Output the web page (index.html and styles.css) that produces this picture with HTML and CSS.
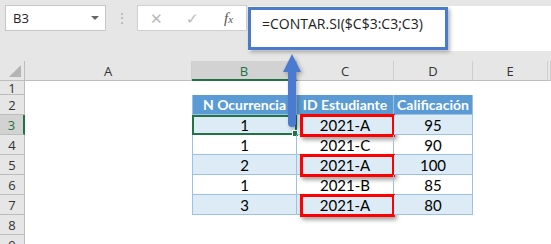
FILE: index.html
```html
<!DOCTYPE html>
<html lang="es">
<head>
  <meta charset="UTF-8">
  <title>CONTAR.SI acumulado</title>
  <link rel="stylesheet" href="styles.css">
</head>
<body>

  <div class="toolbar">
    <div class="namebox">
      <span>B3</span>
      <span class="caret"></span>
    </div>
    <div class="grip">⋮</div>
    <div class="fbuttons">
      <span class="btn">✕</span>
      <span class="btn">✓</span>
      <span class="fx">f<small>x</small></span>
    </div>
    <div class="formula">
      <span class="ftext">=CONTAR.SI($C$3:C3;C3)</span>
      <div class="callout"></div>
    </div>
  </div>

  <div class="sheet">
    <div class="corner"><span class="tri"></span></div>
    <div class="colhead">A</div>
    <div class="colhead active">B</div>
    <div class="colhead">C</div>
    <div class="colhead">D</div>
    <div class="colhead">E</div>
    <div class="colhead"></div>

    <div class="rowhead">1</div>
    <div class="cell"></div><div class="cell"></div><div class="cell"></div><div class="cell"></div><div class="cell"></div><div class="cell"></div>

    <div class="rowhead">2</div>
    <div class="cell"></div>
    <div class="cell th first">N Ocurrencia</div>
    <div class="cell th">ID Estudiante</div>
    <div class="cell th">Calificación</div>
    <div class="cell"></div><div class="cell"></div>

    <div class="rowhead active">3</div>
    <div class="cell"></div>
    <div class="cell td band first selected">1<span class="handle"></span></div>
    <div class="cell td band">2021-A<span class="mark"></span></div>
    <div class="cell td band">95</div>
    <div class="cell"></div><div class="cell"></div>

    <div class="rowhead">4</div>
    <div class="cell"></div>
    <div class="cell td first">1</div>
    <div class="cell td">2021-C</div>
    <div class="cell td">90</div>
    <div class="cell"></div><div class="cell"></div>

    <div class="rowhead">5</div>
    <div class="cell"></div>
    <div class="cell td band first">2</div>
    <div class="cell td band">2021-A<span class="mark"></span></div>
    <div class="cell td band">100</div>
    <div class="cell"></div><div class="cell"></div>

    <div class="rowhead">6</div>
    <div class="cell"></div>
    <div class="cell td first">1</div>
    <div class="cell td">2021-B</div>
    <div class="cell td">85</div>
    <div class="cell"></div><div class="cell"></div>

    <div class="rowhead">7</div>
    <div class="cell"></div>
    <div class="cell td band first">3</div>
    <div class="cell td band">2021-A<span class="mark"></span></div>
    <div class="cell td band">80</div>
    <div class="cell"></div><div class="cell"></div>

    <div class="rowhead">8</div>
    <div class="cell"></div><div class="cell"></div><div class="cell"></div><div class="cell"></div><div class="cell"></div><div class="cell"></div>

    <div class="rowhead">9</div>
    <div class="cell"></div><div class="cell"></div><div class="cell"></div><div class="cell"></div><div class="cell"></div><div class="cell"></div>

    <!-- arrow from the selected cell up to the formula -->
    <svg class="arrow" width="24" height="80" viewBox="0 0 24 80">
      <path d="M12 1 L21 19 L16 19 L16 70 Q16 74 12 74 Q8 74 8 70 L8 19 L3 19 Z" fill="#4a7bd0"/>
    </svg>
  </div>

</body>
</html>
```

FILE: styles.css
```css
body {
  margin: 0;
  width: 551px;
  height: 244px;
  overflow: hidden;
  background: #fff;
  font-family: "Open Sans", "Noto Sans", sans-serif;
  position: relative;
}

/* formula bar */
.toolbar {
  height: 61px;
  background: #e6e6e6;
  display: flex;
  align-items: flex-start;
  padding: 5px 0 0 5px;
  box-sizing: border-box;
}
.namebox {
  width: 101px;
  height: 26px;
  box-sizing: border-box;
  background: #fff;
  border: 1px solid #c6c6c6;
  display: flex;
  align-items: center;
  justify-content: space-between;
  padding: 0 6px 0 7px;
  font-size: 13px;
  color: #222;
}
.caret {
  width: 0; height: 0;
  border-left: 4px solid transparent;
  border-right: 4px solid transparent;
  border-top: 4px solid #666;
}
.grip {
  width: 31px;
  text-align: center;
  color: #b0b0b0;
  font-size: 14px;
  line-height: 26px;
}
.fbuttons {
  width: 110px;
  height: 26px;
  box-sizing: border-box;
  background: #fff;
  border: 1px solid #d0d0d0;
  display: flex;
  align-items: center;
  padding-left: 12px;
}
.btn { width: 36px; color: #b8b8b8; font-size: 15px; }
.fx {
  margin-left: 2px;
  font-family: "Liberation Serif", serif;
  font-style: italic;
  font-size: 15px;
  color: #555;
}
.fx small { font-size: 11px; }
.formula {
  flex: 1;
  height: 45px;
  margin: 1px 0 0 1px;
  background: #fff;
  position: relative;
  padding: 8px 0 0 14px;
  box-sizing: border-box;
  font-size: 14px;
  color: #222;
}
.callout {
  position: absolute;
  left: 0; top: 1px;
  width: 200px; height: 43px;
  box-sizing: border-box;
  border: 3px solid #4a7acb;
  box-shadow: 2px 2px 4px rgba(0,0,0,0.3);
}

/* worksheet */
.sheet {
  display: grid;
  grid-template-columns: 25px 167px 105px 97px 79px 75px 3px;
  grid-template-rows: 20px 14px repeat(7, 20px) 20px;
  position: relative;
}
.corner {
  background: #e6e6e6;
  border-right: 1px solid #bdbdbd;
  border-bottom: 1px solid #bdbdbd;
  position: relative;
}
.tri {
  position: absolute;
  right: 3px; bottom: 3px;
  width: 0; height: 0;
  border-left: 12px solid transparent;
  border-bottom: 12px solid #b4b4b4;
}
.colhead {
  background: #e6e6e6;
  border-right: 1px solid #cfcfcf;
  border-bottom: 1px solid #bdbdbd;
  font-size: 13px;
  color: #333;
  text-align: center;
  line-height: 20px;
  box-sizing: border-box;
}
.colhead.active {
  background: #d2d2d2;
  border-bottom: 2px solid #217346;
  color: #217346;
}
.rowhead {
  background: #e6e6e6;
  border-right: 1px solid #bdbdbd;
  border-bottom: 1px solid #bdbdbd;
  font-size: 13px;
  color: #333;
  display: flex;
  align-items: center;
  justify-content: center;
  box-sizing: border-box;
}
.rowhead.active {
  background: #d2d2d2;
  border-right: 2px solid #217346;
  color: #217346;
}
.cell {
  font-family: Lato, "Open Sans", sans-serif;
  font-size: 15px;
  color: #000;
  position: relative;
  box-sizing: border-box;
}
.th, .td {
  display: flex;
  align-items: center;
  justify-content: center;
  border-right: 1px solid #9bc2e6;
  border-bottom: 1px solid #9bc2e6;
  white-space: nowrap;
}
.th {
  background: #5b9bd5;
  color: #fff;
  font-weight: bold;
  font-size: 14px;
}
.first { border-left: 1px solid #9bc2e6; }
.band { background: #ddebf7; }
.selected { border: 2px solid #217346; }
.handle {
  position: absolute;
  right: -4px; bottom: -4px;
  width: 5px; height: 5px;
  background: #217346;
  border: 1px solid #fff;
}
.mark {
  position: absolute;
  left: 3px; right: -2px;
  top: -1px; bottom: -3px;
  border: 3px solid #f00;
  box-shadow: 2px 3px 4px rgba(0,0,0,0.35);
}
.arrow {
  position: absolute;
  left: 280px;
  top: -8px;
  filter: drop-shadow(2px 2px 2px rgba(0,0,0,0.3));
}
```
